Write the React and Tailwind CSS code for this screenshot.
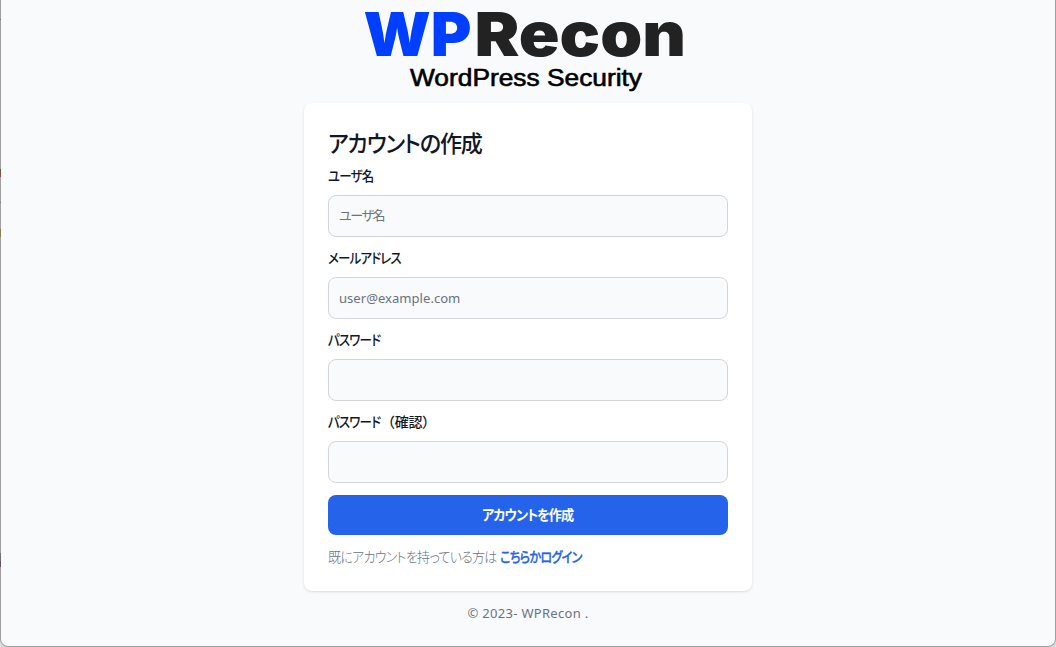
import React, { useState } from 'react';

const fields = [
  { id: 'username', kana: 'ユーザ名', kanji: '', type: 'text', placeholder: 'ユーザ名', width: 'w-[47px]' },
  { id: 'email', kana: 'メールアドレス', kanji: '', type: 'email', placeholder: 'user@example.com', width: 'w-[74px]' },
  { id: 'password', kana: 'パスワード', kanji: '', type: 'password', placeholder: '', width: 'w-[53px]' },
  { id: 'confirm', kana: 'パスワード', kanji: '（確認）', type: 'password', placeholder: '', width: 'w-[53px]' },
];

// What shows of the window behind, along the left edge
const edgeMarks = [
  { id: 1, style: 'top-[19px] h-px bg-[#777777]' },
  { id: 2, style: 'top-[169px] h-[8px] bg-[#805045]' },
  { id: 3, style: 'top-[202px] h-px bg-[#777777]' },
  { id: 4, style: 'top-[229px] h-[8px] bg-[#8a7c55]' },
  { id: 5, style: 'top-[553px] h-[8px] bg-[#707070]' },
  { id: 6, style: 'top-[561px] h-[6px] bg-[#66506a]' },
];

const Logo = () => (
  <svg width="330" height="95" viewBox="0 0 330 95" role="img" aria-label="WPRecon WordPress Security">
    <g fontFamily="Inter, sans-serif" fontWeight="900" fontSize="61">
      <text x="0.5" y="56" textLength="108" lengthAdjust="spacingAndGlyphs" fill="#003fff">WP</text>
      <text x="111.5" y="56" textLength="211.5" lengthAdjust="spacingAndGlyphs" fill="#222222">Recon</text>
    </g>
    <text
      x="47"
      y="86"
      textLength="232"
      lengthAdjust="spacingAndGlyphs"
      fontFamily="'Liberation Sans', sans-serif"
      fontSize="23.5"
      fill="#000000"
      stroke="#000000"
      strokeWidth="0.6"
    >
      WordPress Security
    </text>
  </svg>
);

const App = () => {
  const [values, setValues] = useState({});

  const handleChange = (e) => {
    setValues({ ...values, [e.target.id]: e.target.value });
  };

  return (
    <div className="relative h-[647px] overflow-hidden bg-[#dedede] font-['Noto_Sans','Noto_Sans_CJK_JP',sans-serif]">
      <div className="h-[647px] rounded-b-lg border-x border-b border-[#a0a0a0] bg-[#f9fafc] flex flex-col items-center">
        <div className="h-[103px] shrink-0">
          <Logo />
        </div>

        <main className="w-[448px] h-[488px] shrink-0 bg-white rounded-lg shadow-sm p-6">
          <h1 className="h-7 mb-3 pt-[2px] text-[23px] leading-7 font-medium tracking-[-1.2px] text-gray-900 whitespace-nowrap origin-left scale-x-[0.96] [font-feature-settings:'palt']">
            アカウントの作成
          </h1>

          <form className="space-y-3" onSubmit={(e) => e.preventDefault()}>
            {fields.map((field) => (
              <div key={field.id}>
                <label
                  htmlFor={field.id}
                  className="flex h-5 -mt-px mb-[9px] text-sm font-medium text-gray-900 whitespace-nowrap"
                >
                  <span className={field.width}>
                    <span className="inline-block origin-left scale-x-[0.89] tracking-[-0.9px] [font-feature-settings:'palt']">
                      {field.kana}
                    </span>
                  </span>
                  {field.kanji && <span className="tracking-[-0.3px]">{field.kanji}</span>}
                </label>
                <input
                  id={field.id}
                  type={field.type}
                  value={values[field.id] || ''}
                  onChange={handleChange}
                  placeholder={field.placeholder}
                  className={`block w-full h-[42px] px-2.5 bg-[#f9fafc] border border-[#d1d5db] rounded-lg text-gray-900 placeholder:text-[#6b7280] [font-feature-settings:'palt'] ${
                    field.type === 'email' ? 'text-[13.1px]' : 'pb-0.5 text-[13px] tracking-[-1.4px]'
                  }`}
                />
              </div>
            ))}

            <button
              type="submit"
              className="block w-full h-10 rounded-lg bg-[#2563eb] text-sm font-bold text-white"
            >
              <span className="inline-block scale-x-[0.94] tracking-[-1px] [font-feature-settings:'palt']">
                アカウントを作成
              </span>
            </button>

            <p className="flex h-5 text-sm leading-5 font-light text-[#6b7280] whitespace-nowrap [font-feature-settings:'palt']">
              <span className="w-[172px]">
                <span className="inline-block origin-left scale-x-[0.93] tracking-[-0.8px]">
                  既にアカウントを持っている方は
                </span>
              </span>
              <a
                href="#login"
                className="inline-block origin-left scale-x-[0.86] font-medium tracking-[-0.8px] text-[#2563eb] [-webkit-text-stroke:0.3px]"
              >
                こちらかログイン
              </a>
            </p>
          </form>
        </main>

        <footer className="mt-3 text-[13px] leading-5 tracking-[0.3px] text-[#6b7280]">© 2023- WPRecon .</footer>
      </div>

      {edgeMarks.map((mark) => (
        <span key={mark.id} className={`absolute left-0 w-px ${mark.style}`} />
      ))}
    </div>
  );
};

export default App;
